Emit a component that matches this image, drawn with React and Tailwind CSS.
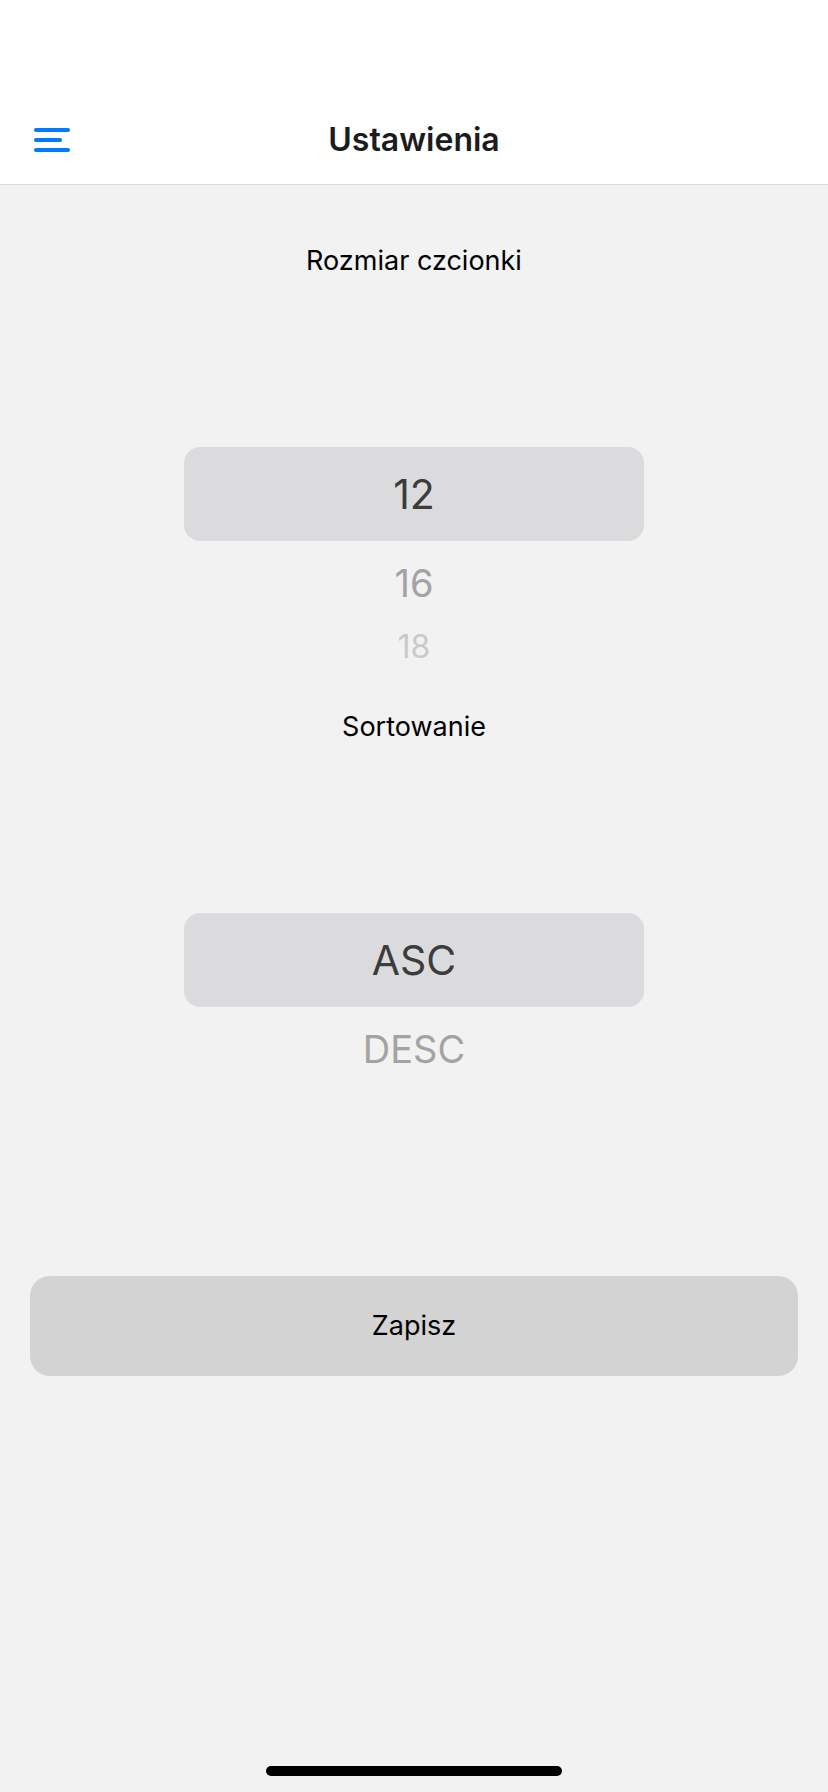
import { useState } from "react";
import clsx from "clsx";

const SIZES = ["12", "16", "18"];
const ORDERS = ["ASC", "DESC"];

// Row appearance by distance from the selected row of the wheel.
const ROW_STYLES = [
  "h-[94px] rounded-2xl bg-[#dbdbdd] text-[41px] text-[#3c3c3e]",
  "h-[84px] text-[38px] text-[#a3a3a3]",
  "h-[44px] text-[32px] text-[#c9c9c9]",
];

function WheelPicker({ name, title, options }) {
  const [selected, setSelected] = useState(0);
  const offsets = [-2, -1, 0, 1, 2];

  return (
    <section className="flex w-full flex-col items-center">
      <h2 id={name} className="text-[27px] leading-[34px] text-black">
        {title}
      </h2>
      <div
        role="radiogroup"
        aria-labelledby={name}
        className="flex w-3/5 flex-col py-[41px]"
      >
        {offsets.map((offset) => {
          const index = selected + offset;
          const option = options[index];
          const rowStyle = ROW_STYLES[Math.abs(offset)];
          if (option === undefined) {
            return <div key={`empty${offset}`} className={rowStyle} />;
          }
          return (
            <label
              key={option}
              className={clsx(
                "relative flex cursor-pointer items-center justify-center leading-none",
                rowStyle
              )}
            >
              <input
                type="radio"
                name={name}
                value={option}
                checked={offset === 0}
                onChange={() => setSelected(index)}
                className="sr-only"
              />
              {option}
            </label>
          );
        })}
      </div>
    </section>
  );
}

export default function App() {
  return (
    <div className="flex min-h-screen flex-col bg-[#f2f2f2] font-['Inter','Liberation_Sans',sans-serif]">
      <header className="grid grid-cols-[1fr_auto_1fr] items-center border-b border-[#d8d8d8] bg-white px-[34px] pt-24">
        <button type="button" aria-label="Menu" className="flex h-[88px] w-9 items-center">
          <svg viewBox="0 0 36 24" className="h-6 w-9 fill-[#007aff]" aria-hidden="true">
            <rect x="0" y="0" width="36" height="4" rx="2" />
            <rect x="0" y="10" width="28" height="4" rx="2" />
            <rect x="0" y="20" width="36" height="4" rx="2" />
          </svg>
        </button>
        <h1 className="text-[32px] leading-10 font-semibold text-[#1c1c1e]">Ustawienia</h1>
      </header>

      <main className="flex flex-col items-center px-[30px] pt-[59px]">
        <WheelPicker name="font-size" title="Rozmiar czcionki" options={SIZES} />
        <WheelPicker name="sort-order" title="Sortowanie" options={ORDERS} />
        <button
          type="button"
          className="mt-[100px] h-[100px] w-full rounded-[20px] bg-[#d3d3d3] text-[27px] leading-[34px] text-black"
        >
          Zapisz
        </button>
      </main>

      <footer className="mt-auto flex justify-center pb-4">
        <div className="h-[10px] w-[296px] rounded-full bg-black" />
      </footer>
    </div>
  );
}
